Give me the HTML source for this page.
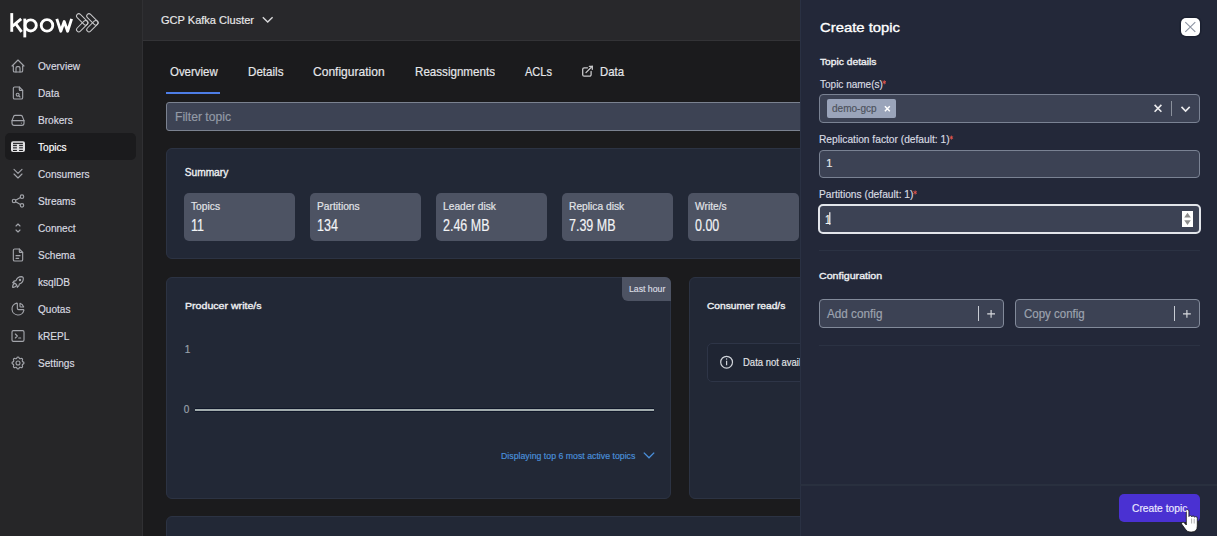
<!DOCTYPE html>
<html><head><meta charset="utf-8">
<style>
html,body{margin:0;padding:0;width:1217px;height:536px;overflow:hidden;background:#1b1b1d;font-family:"Liberation Sans",sans-serif;}
.a{position:absolute;box-sizing:border-box;}
.t{position:absolute;white-space:nowrap;line-height:1;transform-origin:0 0;}
.m{-webkit-text-stroke:0.18px currentColor;}
.sb{-webkit-text-stroke:0.35px currentColor;}
svg{position:absolute;overflow:visible;}
</style></head><body>
<!-- sidebar -->
<div class="a" style="left:0;top:0;width:142px;height:536px;background:#262628;"></div>
<div class="a" style="left:142px;top:0;width:1px;height:536px;background:#303033;"></div>
<!-- topbar -->
<div class="a" style="left:143px;top:0;width:1074px;height:40px;background:#28282b;"></div>
<div class="a" style="left:143px;top:40px;width:1074px;height:1px;background:#333336;"></div>
<!-- active item -->
<div class="a" style="left:5px;top:133px;width:131px;height:27px;border-radius:5px;background:#1b1b1d;"></div>
<!-- tab underline -->
<div class="a" style="left:166px;top:92px;width:54px;height:2px;background:#4d7de6;"></div>
<!-- filter -->
<div class="a" style="left:166px;top:102px;width:1028px;height:29px;border-radius:3px;background:#3d4354;border:1.5px solid #7b8290;"></div>
<!-- summary card -->
<div class="a" style="left:166px;top:148px;width:1028px;height:111px;border-radius:6px;background:#222836;border:1px solid #2c3343;"></div>
<div class="a" style="left:184px;top:193px;width:111px;height:48px;border-radius:5px;background:#4d5363;"></div>
<div class="a" style="left:310px;top:193px;width:111px;height:48px;border-radius:5px;background:#4d5363;"></div>
<div class="a" style="left:436px;top:193px;width:111px;height:48px;border-radius:5px;background:#4d5363;"></div>
<div class="a" style="left:562px;top:193px;width:111px;height:48px;border-radius:5px;background:#4d5363;"></div>
<div class="a" style="left:688px;top:193px;width:111px;height:48px;border-radius:5px;background:#4d5363;"></div>
<!-- chart cards -->
<div class="a" style="left:166px;top:277px;width:505px;height:222px;border-radius:6px;background:#222836;border:1px solid #2c3343;"></div>
<div class="a" style="left:622px;top:277px;width:49px;height:24px;border-radius:0 6px 0 6px;background:#4d5363;"></div>
<div class="a" style="left:195px;top:408px;width:459px;height:4px;background:#0f1628;"></div>
<div class="a" style="left:195px;top:409px;width:459px;height:2px;background:#a2acad;"></div>
<div class="a" style="left:689px;top:277px;width:505px;height:222px;border-radius:6px;background:#222836;border:1px solid #2c3343;"></div>
<div class="a" style="left:707px;top:343px;width:470px;height:39px;border-radius:5px;background:#1f2533;border:1px solid #2e3547;"></div>
<div class="a" style="left:166px;top:516px;width:1028px;height:40px;border-radius:6px;background:#222836;border:1px solid #2c3343;"></div>

<!-- drawer --><div style="position:absolute;left:0;top:0;width:1217px;height:536px;z-index:2">
<div class="a" style="left:800px;top:0;width:417px;height:536px;background:#232839;border-left:1px solid #2a3143;"></div>
<div class="a" style="left:1181px;top:18px;width:19px;height:18px;border-radius:5px;background:#ffffff;box-shadow:0 0 0 1.5px #1b2030;"></div>
<div class="a" style="left:819px;top:94px;width:381px;height:29px;border-radius:4px;background:#3c4254;border:1px solid #7a8293;"></div>
<div class="a" style="left:827px;top:99px;width:69px;height:19px;border-radius:2px;background:#9aa4ba;"></div>
<div class="a" style="left:1171px;top:101px;width:1px;height:15px;background:#8a909c;"></div>
<div class="a" style="left:819px;top:150px;width:381px;height:28px;border-radius:4px;background:#3c4254;border:1px solid #7a8293;"></div>
<div class="a" style="left:818px;top:204px;width:382.5px;height:30px;border-radius:5px;background:#3c4254;border:2px solid #e2e5ea;"></div>
<div class="a" style="left:1182px;top:211px;width:11px;height:16px;background:#ffffff;"></div>
<div class="a" style="left:819px;top:250px;width:381px;height:1px;background:#2b3243;"></div>
<div class="a" style="left:819px;top:299px;width:185px;height:29px;border-radius:4px;background:#3c4254;border:1px solid #828a9a;"></div>
<div class="a" style="left:978px;top:306px;width:1px;height:15px;background:#c8ccd4;"></div>
<div class="a" style="left:1015px;top:299px;width:185px;height:29px;border-radius:4px;background:#3c4254;border:1px solid #828a9a;"></div>
<div class="a" style="left:1174px;top:306px;width:1px;height:15px;background:#c8ccd4;"></div>
<div class="a" style="left:819px;top:345px;width:381px;height:1px;background:#2b3243;"></div>
<div class="a" style="left:800px;top:484px;width:417px;height:2px;background:#29303f;"></div>
<div class="a" style="left:1119px;top:494px;width:81px;height:28px;border-radius:5px;background:#4a31d2;"></div>

</div>
<svg style="left:0;top:0;z-index:1" width="1217" height="536" viewBox="0 0 1217 536">
<!-- logo -->
<g fill="none" stroke="#ffffff" stroke-width="2.85">
 <path d="M11.75 13.1V31.8"/>
 <path d="M12.5 26.2L21.2 18.9"/>
 <path d="M15.6 23.6L21.6 31.8" />
 <path d="M24.8 18.6V37.4"/>
 <circle cx="30.7" cy="25.4" r="5.6"/>
 <circle cx="47" cy="25.4" r="5.75"/>
 <path d="M56.8 18.9L60.8 31.2L64.2 21.5L67.6 31.2L71.6 18.9" stroke-linejoin="round"/>
</g>
<g fill="none" stroke="#c8c8ca" stroke-width="1.0">
 <rect x="-7.06" y="-2.25" width="14.12" height="4.5" rx="2.25" transform="translate(82.2 19.4) rotate(45)"/>
 <rect x="-7.06" y="-2.25" width="14.12" height="4.5" rx="2.25" transform="translate(82.2 26.2) rotate(-45)"/>
 <rect x="-7.06" y="-2.25" width="14.12" height="4.5" rx="2.25" transform="translate(92.4 19.4) rotate(45)"/>
 <rect x="-7.06" y="-2.25" width="14.12" height="4.5" rx="2.25" transform="translate(92.4 26.2) rotate(-45)"/>
</g>
<!-- sidebar icons -->
<g fill="none" stroke="#a3a5ab" stroke-width="1.7" stroke-linecap="round" stroke-linejoin="round">
 <g transform="translate(10 58) scale(0.6667)"><path d="M5 12l-2 0l9 -9l9 9l-2 0"/><path d="M5 12v7a2 2 0 0 0 2 2h10a2 2 0 0 0 2 -2v-7"/><path d="M9 21v-6a2 2 0 0 1 2 -2h2a2 2 0 0 1 2 2v6"/></g>
 <g transform="translate(10 85) scale(0.6667)"><path d="M14 3v4a1 1 0 0 0 1 1h4"/><path d="M17 21h-10a2 2 0 0 1 -2 -2v-14a2 2 0 0 1 2 -2h7l5 5v11a2 2 0 0 1 -2 2z"/><circle cx="11.5" cy="14.5" r="2.2"/><path d="M13.2 16.2l1.8 1.8"/></g>
 <g transform="translate(10 112) scale(0.6667)"><path d="M3 13h18v4a3 3 0 0 1 -3 3h-12a3 3 0 0 1 -3 -3z"/><path d="M3 13l2.5 -6.5a2.5 2.5 0 0 1 2.3 -1.5h8.4a2.5 2.5 0 0 1 2.3 1.5l2.5 6.5"/><path d="M17 16.6h.01"/></g>
 <g transform="translate(10 166) scale(0.6667)"><path d="M6 5l6 6l6 -6"/><path d="M6 12l6 6l6 -6"/></g>
 <g transform="translate(10 193) scale(0.6667)"><circle cx="6" cy="12" r="2.6"/><circle cx="18" cy="5.5" r="2.6"/><circle cx="18" cy="18.5" r="2.6"/><path d="M8.4 10.8l7.2 -4"/><path d="M8.4 13.2l7.2 4"/></g>
 <g transform="translate(10 220) scale(0.6667)"><path d="M9 9l3 -3l3 3"/><path d="M15 15l-3 3l-3 -3"/></g>
 <g transform="translate(10 247) scale(0.6667)"><path d="M14 3v4a1 1 0 0 0 1 1h4"/><path d="M17 21h-10a2 2 0 0 1 -2 -2v-14a2 2 0 0 1 2 -2h7l5 5v11a2 2 0 0 1 -2 2z"/><path d="M9 13l6 0"/><path d="M9 17l4 0"/></g>
 <g transform="translate(10 274) scale(0.6667)"><path d="M4 13a8 8 0 0 1 7 7a6 6 0 0 0 3 -5a9 9 0 0 0 6 -8a3 3 0 0 0 -3 -3a9 9 0 0 0 -8 6a6 6 0 0 0 -5 3"/><path d="M7 14a6 6 0 0 0 -3 6a6 6 0 0 0 6 -3"/><circle cx="15" cy="9" r="1"/></g>
 <g transform="translate(10 301) scale(0.6667)"><path d="M10 3.2a9 9 0 1 0 10.8 10.8a1 1 0 0 0 -1 -1h-6.8a2 2 0 0 1 -2 -2v-7a.9 .9 0 0 0 -1 -.8"/><path d="M15 3.5a9 9 0 0 1 5.5 5.5h-4.5a1 1 0 0 1 -1 -1v-4.5"/></g>
 <g transform="translate(10 328) scale(0.6667)"><path d="M8 9l3 3l-3 3"/><path d="M13 15l3 0"/><rect x="3" y="4" width="18" height="16" rx="2"/></g>
 <g transform="translate(10 355) scale(0.6667)"><path d="M10.325 4.317c.426 -1.756 2.924 -1.756 3.35 0a1.724 1.724 0 0 0 2.573 1.066c1.543 -.94 3.31 .826 2.37 2.37a1.724 1.724 0 0 0 1.065 2.572c1.756 .426 1.756 2.924 0 3.35a1.724 1.724 0 0 0 -1.066 2.573c.94 1.543 -.826 3.31 -2.37 2.37a1.724 1.724 0 0 0 -2.572 1.065c-.426 1.756 -2.924 1.756 -3.35 0a1.724 1.724 0 0 0 -2.573 -1.066c-1.543 .94 -3.31 -.826 -2.37 -2.37a1.724 1.724 0 0 0 -1.065 -2.572c-1.756 -.426 -1.756 -2.924 0 -3.35a1.724 1.724 0 0 0 1.066 -2.573c-.94 -1.543 .826 -3.31 2.37 -2.37c1 .608 2.296 .07 2.572 -1.065z"/><path d="M9 12a3 3 0 1 0 6 0a3 3 0 0 0 -6 0"/></g>
</g>
<!-- topics table icon (filled) -->
<rect x="11" y="141.2" width="14" height="10.9" rx="2" fill="#e2e2e4"/>
<g fill="#1b1b1d">
 <rect x="13" y="142.8" width="9.9" height="1.1"/>
 <rect x="13" y="144.8" width="3.9" height="1.1"/><rect x="19.1" y="144.8" width="3.8" height="1.1"/>
 <rect x="13" y="149.9" width="3.9" height="1.1"/><rect x="19.1" y="149.9" width="3.8" height="1.1"/>
</g>
<g fill="#5a5a5e">
 <rect x="13" y="146.8" width="3.9" height="1.8"/><rect x="19.1" y="146.8" width="3.8" height="1.8"/>
</g>
<!-- topbar chevron -->
<path d="M262.8 17.2L267.7 22.1L272.6 17.2" fill="none" stroke="#d8d8da" stroke-width="1.4"/>
<!-- external link icon -->
<g fill="none" stroke="#c9c9cb" stroke-width="1.3" stroke-linecap="round" stroke-linejoin="round">
 <path d="M587.5 67.8h-3.3a1.5 1.5 0 0 0 -1.5 1.5v5.4a1.5 1.5 0 0 0 1.5 1.5h5.4a1.5 1.5 0 0 0 1.5 -1.5v-3.3"/>
 <path d="M586 72.6L592.3 66.3"/><path d="M589.3 66.3h3v3"/>
</g>
<!-- displaying chevron -->
<path d="M643.8 452.6L649 457.8L654.2 452.6" fill="none" stroke="#4a90dc" stroke-width="1.3"/>
<!-- info icon -->
<circle cx="726.6" cy="362.2" r="5.9" fill="none" stroke="#d0d4da" stroke-width="1.2"/>
<path d="M726.6 360.8V365.2" stroke="#d0d4da" stroke-width="1.2"/>
<circle cx="726.6" cy="359" r="0.7" fill="#d0d4da"/>
</svg>
<svg style="left:0;top:0;z-index:3" width="1217" height="536" viewBox="0 0 1217 536">
<!-- close X -->
<path d="M1185.3 22.2L1195.3 31.9M1195.3 22.2L1185.3 31.9" stroke="#8c93a2" stroke-width="1.1" fill="none"/>
<!-- chip x -->
<path d="M884.9 106.2L889.8 111.2M889.8 106.2L884.9 111.2" stroke="#ffffff" stroke-width="1.5" fill="none"/>
<!-- clear x -->
<path d="M1154.6 104.9L1161.4 111.8M1161.4 104.9L1154.6 111.8" stroke="#ececee" stroke-width="1.6" fill="none"/>
<!-- dropdown chevron -->
<path d="M1181.5 106.9L1185.6 111L1189.7 106.9" stroke="#ececee" stroke-width="1.6" fill="none"/>
<!-- asterisks -->
<g stroke="#e5534b" stroke-width="0.9" fill="none">
<path d="M884.3 80.3V84.3M882.6 81.3L886 83.3M886 81.3L882.6 83.3"/>
<path d="M951.4 135.6V139.6M949.7 136.6L953.1 138.6M953.1 136.6L949.7 138.6"/>
<path d="M915.2 190.5V194.5M913.5 191.5L916.9 193.5M916.9 191.5L913.5 193.5"/>
</g>
<!-- spinner triangles -->
<path d="M1184.2 217.6L1187.5 212.8L1190.8 217.6Z" fill="#8c8c8c"/>
<path d="M1184.2 220.2L1187.5 225L1190.8 220.2Z" fill="#8c8c8c"/>
<!-- text cursor -->
<rect x="829.2" y="212.2" width="1.2" height="12.6" fill="#f4f5f7"/>
<!-- plus signs -->
<path d="M987.2 313.8H995M991.1 309.9V317.7" stroke="#d8dade" stroke-width="1.15" fill="none"/>
<path d="M1183 313.8H1190.8M1186.9 309.9V317.7" stroke="#d8dade" stroke-width="1.15" fill="none"/>
<!-- hand cursor -->
<path d="M1186.3 511 Q1186.3 509.6 1187.6 509.6 Q1188.9 509.6 1188.9 511 L1188.9 516.5 Q1189.2 515.6 1190.4 515.6 Q1191.6 515.6 1191.7 516.8 Q1192 516 1193.1 516 Q1194.3 516 1194.5 517.2 Q1194.8 516.6 1195.8 516.6 Q1197.3 516.6 1197.3 518.2 L1197.3 526 Q1197.3 532 1191.5 532 L1190 532 Q1187.5 532 1185.8 529.8 L1181.8 524.3 Q1181 523 1182.2 522.4 Q1183.4 521.8 1184.5 523 L1186.3 525 Z" fill="#ffffff" stroke="#111111" stroke-width="0.8"/>
<path d="M1191.6 518.5V523.5M1194.2 518.8V523.5" stroke="#777" stroke-width="0.6"/>
</svg>

<div class="t m" style="z-index:1;left:37.5px;top:59.98px;font-size:11.6px;font-weight:400;color:#d9dbe0;transform:scaleX(0.870);">Overview</div>
<div class="t m" style="z-index:1;left:37.5px;top:86.98px;font-size:11.6px;font-weight:400;color:#d9dbe0;transform:scaleX(0.870);">Data</div>
<div class="t m" style="z-index:1;left:37.5px;top:113.98px;font-size:11.6px;font-weight:400;color:#d9dbe0;transform:scaleX(0.870);">Brokers</div>
<div class="t m" style="z-index:1;left:37.5px;top:140.98px;font-size:11.6px;font-weight:400;color:#ffffff;transform:scaleX(0.870);">Topics</div>
<div class="t m" style="z-index:1;left:37.5px;top:167.98px;font-size:11.6px;font-weight:400;color:#d9dbe0;transform:scaleX(0.870);">Consumers</div>
<div class="t m" style="z-index:1;left:37.5px;top:194.98px;font-size:11.6px;font-weight:400;color:#d9dbe0;transform:scaleX(0.870);">Streams</div>
<div class="t m" style="z-index:1;left:37.5px;top:221.98px;font-size:11.6px;font-weight:400;color:#d9dbe0;transform:scaleX(0.870);">Connect</div>
<div class="t m" style="z-index:1;left:37.5px;top:248.98px;font-size:11.6px;font-weight:400;color:#d9dbe0;transform:scaleX(0.870);">Schema</div>
<div class="t m" style="z-index:1;left:37.5px;top:275.98px;font-size:11.6px;font-weight:400;color:#d9dbe0;transform:scaleX(0.870);">ksqlDB</div>
<div class="t m" style="z-index:1;left:37.5px;top:302.98px;font-size:11.6px;font-weight:400;color:#d9dbe0;transform:scaleX(0.870);">Quotas</div>
<div class="t m" style="z-index:1;left:37.5px;top:329.98px;font-size:11.6px;font-weight:400;color:#d9dbe0;transform:scaleX(0.870);">kREPL</div>
<div class="t m" style="z-index:1;left:37.5px;top:356.98px;font-size:11.6px;font-weight:400;color:#d9dbe0;transform:scaleX(0.870);">Settings</div>
<div class="t m" style="z-index:1;left:160.6px;top:13.98px;font-size:11.6px;font-weight:400;color:#e8e8ea;transform:scaleX(0.952);">GCP Kafka Cluster</div>
<div class="t m" style="z-index:1;left:169.5px;top:65.87px;font-size:12.2px;font-weight:400;color:#e6e7ea;transform:scaleX(0.939);">Overview</div>
<div class="t m" style="z-index:1;left:247.8px;top:65.87px;font-size:12.2px;font-weight:400;color:#e6e7ea;transform:scaleX(0.953);">Details</div>
<div class="t m" style="z-index:1;left:312.9px;top:65.87px;font-size:12.2px;font-weight:400;color:#e6e7ea;transform:scaleX(0.988);">Configuration</div>
<div class="t m" style="z-index:1;left:414.5px;top:65.87px;font-size:12.2px;font-weight:400;color:#e6e7ea;transform:scaleX(0.952);">Reassignments</div>
<div class="t m" style="z-index:1;left:524.5px;top:65.87px;font-size:12.2px;font-weight:400;color:#e6e7ea;transform:scaleX(0.906);">ACLs</div>
<div class="t m" style="z-index:1;left:599.5px;top:65.87px;font-size:12.2px;font-weight:400;color:#e6e7ea;transform:scaleX(0.932);">Data</div>
<div class="t m" style="z-index:1;left:174.8px;top:110.64px;font-size:12px;font-weight:400;color:#939aa6;transform:scaleX(1.012);">Filter topic</div>
<div class="t sb" style="z-index:1;left:184.7px;top:168.17px;font-size:10.2px;font-weight:400;color:#eef0f3;">Summary</div>
<div class="t m" style="z-index:1;left:191.0px;top:201.09px;font-size:11px;font-weight:400;color:#e3e5e9;transform:scaleX(0.930);">Topics</div>
<div class="t m" style="z-index:1;left:191.0px;top:217.79px;font-size:15.6px;font-weight:400;color:#f3f4f6;transform:scaleX(0.800);">11</div>
<div class="t m" style="z-index:1;left:317.0px;top:201.09px;font-size:11px;font-weight:400;color:#e3e5e9;transform:scaleX(0.930);">Partitions</div>
<div class="t m" style="z-index:1;left:317.0px;top:217.79px;font-size:15.6px;font-weight:400;color:#f3f4f6;transform:scaleX(0.800);">134</div>
<div class="t m" style="z-index:1;left:443.0px;top:201.09px;font-size:11px;font-weight:400;color:#e3e5e9;transform:scaleX(0.930);">Leader disk</div>
<div class="t m" style="z-index:1;left:443.0px;top:217.79px;font-size:15.6px;font-weight:400;color:#f3f4f6;transform:scaleX(0.800);">2.46 MB</div>
<div class="t m" style="z-index:1;left:569.0px;top:201.09px;font-size:11px;font-weight:400;color:#e3e5e9;transform:scaleX(0.930);">Replica disk</div>
<div class="t m" style="z-index:1;left:569.0px;top:217.79px;font-size:15.6px;font-weight:400;color:#f3f4f6;transform:scaleX(0.800);">7.39 MB</div>
<div class="t m" style="z-index:1;left:695.0px;top:201.09px;font-size:11px;font-weight:400;color:#e3e5e9;transform:scaleX(0.930);">Write/s</div>
<div class="t m" style="z-index:1;left:695.0px;top:217.79px;font-size:15.6px;font-weight:400;color:#f3f4f6;transform:scaleX(0.800);">0.00</div>
<div class="t sb" style="z-index:1;left:184.6px;top:300.97px;font-size:9.6px;font-weight:400;color:#eef0f3;transform:scaleX(1.105);">Producer write/s</div>
<div class="t m" style="z-index:1;left:628.6px;top:284.88px;font-size:9px;font-weight:400;color:#d9dce2;transform:scaleX(0.967);">Last hour</div>
<div class="t m" style="z-index:1;left:184.8px;top:345.34px;font-size:10px;font-weight:400;color:#9aa1ab;">1</div>
<div class="t m" style="z-index:1;left:183.7px;top:405.14px;font-size:10px;font-weight:400;color:#9aa1ab;">0</div>
<div class="t m" style="z-index:1;left:500.6px;top:450.96px;font-size:9.5px;font-weight:400;color:#4a90dc;transform:scaleX(0.922);">Displaying top 6 most active topics</div>
<div class="t sb" style="z-index:1;left:707.4px;top:300.97px;font-size:9.6px;font-weight:400;color:#eef0f3;transform:scaleX(1.064);">Consumer read/s</div>
<div class="t m" style="z-index:1;left:743.2px;top:356.81px;font-size:11.8px;font-weight:400;color:#e2e4e8;transform:scaleX(0.805);">Data not available</div>
<div class="t sb" style="z-index:3;left:819.5px;top:20.59px;font-size:13.6px;font-weight:400;color:#ffffff;transform:scaleX(1.091);">Create topic</div>
<div class="t sb" style="z-index:3;left:819.8px;top:57.10px;font-size:9.8px;font-weight:400;color:#eef0f3;transform:scaleX(1.046);">Topic details</div>
<div class="t m" style="z-index:3;left:819.8px;top:78.67px;font-size:11.5px;font-weight:400;color:#d9dce2;transform:scaleX(0.870);">Topic name(s)</div>
<div class="t m" style="z-index:3;left:831.9px;top:102.69px;font-size:11px;font-weight:400;color:#4d525c;transform:scaleX(0.912);">demo-gcp</div>
<div class="t m" style="z-index:3;left:819.3px;top:133.97px;font-size:11.5px;font-weight:400;color:#d9dce2;transform:scaleX(0.888);">Replication factor (default: 1)</div>
<div class="t m" style="z-index:3;left:826.2px;top:158.39px;font-size:11px;font-weight:400;color:#e5e7eb;">1</div>
<div class="t m" style="z-index:3;left:819.3px;top:188.87px;font-size:11.5px;font-weight:400;color:#d9dce2;transform:scaleX(0.890);">Partitions (default: 1)</div>
<div class="t m" style="z-index:3;left:825.2px;top:214.04px;font-size:12px;font-weight:400;color:#f3f4f6;transform:scaleX(0.850);">1</div>
<div class="t sb" style="z-index:3;left:819.0px;top:271.20px;font-size:9.8px;font-weight:400;color:#eef0f3;transform:scaleX(1.084);">Configuration</div>
<div class="t m" style="z-index:3;left:827.1px;top:307.64px;font-size:12px;font-weight:400;color:#9ca3af;transform:scaleX(0.977);">Add config</div>
<div class="t m" style="z-index:3;left:1023.5px;top:307.64px;font-size:12px;font-weight:400;color:#9ca3af;transform:scaleX(0.958);">Copy config</div>
<div class="t m" style="z-index:3;left:1131.6px;top:502.52px;font-size:11.2px;font-weight:400;color:#ece9ff;transform:scaleX(0.918);">Create topic</div>
</body></html>
